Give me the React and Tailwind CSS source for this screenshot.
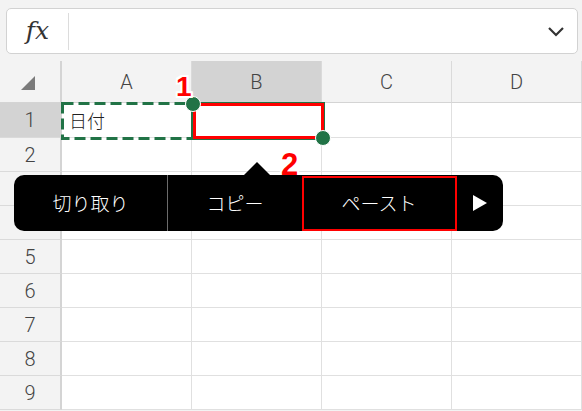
import React from 'react';

const cols = ['A', 'B', 'C', 'D'];
const rows = [1, 2, 3, 4, 5, 6, 7, 8, 9];

function Row({ n }) {
    const active = n === 1;
    return (
        <div className={`flex ${active ? 'h-[35px]' : 'h-[34px]'}`}>
            <div
                className={`w-[62px] shrink-0 flex items-center justify-center border-r-2 border-b border-r-[#d4d4d4] border-b-[#dadada] font-['Roboto',sans-serif] font-light text-[20px] text-[#444] ${
                    active ? 'bg-[#d3d3d3]' : 'bg-[#f3f3f3]'
                }`}
            >
                {n}
            </div>
            {cols.map((c) => (
                <div
                    key={c}
                    className="w-[130px] shrink-0 flex items-center pl-[7px] border-r border-b border-[#e0e0e0] bg-white font-light text-[18px] text-[#222]"
                >
                    {n === 1 && c === 'A' ? '日付' : ''}
                </div>
            ))}
        </div>
    );
}

export default function App() {
    return (
        <div className="relative w-[582px] h-[411px] overflow-hidden bg-[#f3f3f3] font-['Noto_Sans_CJK_JP',sans-serif]">
            {/* 数式バー */}
            <div className="h-[61px] pt-[8px] pl-[6px] pr-[4px]">
                <div className="h-[46px] flex items-center bg-white border border-[#d2d2d2] rounded-[5px]">
                    <div className="w-[62px] h-[37px] flex items-center justify-center border-r border-[#dcdcdc] font-['DejaVu_Serif',serif] italic text-[25px] text-[#333]">
                        fx
                    </div>
                    <div className="flex-1" />
                    <svg className="mr-[12px]" width="18" height="12" viewBox="0 0 18 12">
                        <polyline points="2,3 9,10 16,3" fill="none" stroke="#333" strokeWidth="2.2" />
                    </svg>
                </div>
            </div>

            {/* 列見出し */}
            <div className="flex h-[42px]">
                <div className="w-[62px] shrink-0 flex items-end justify-end pr-[25px] pb-[12px] border-r-2 border-b border-r-[#d4d4d4] border-b-[#d4d4d4]">
                    <svg width="14" height="14" viewBox="0 0 14 14">
                        <polygon points="14,0 14,14 0,14" fill="#7a7a7a" />
                    </svg>
                </div>
                {cols.map((c) => (
                    <div
                        key={c}
                        className={`w-[130px] shrink-0 flex items-center justify-center border-r border-b border-r-[#dadada] border-b-[#d4d4d4] font-['Roboto',sans-serif] font-light text-[20px] text-[#444] ${
                            c === 'B' ? 'bg-[#d3d3d3]' : 'bg-[#f3f3f3]'
                        }`}
                    >
                        {c}
                    </div>
                ))}
            </div>

            {/* 行 */}
            <div className="flex flex-col">
                {rows.map((n) => (
                    <Row key={n} n={n} />
                ))}
            </div>

            {/* A1 コピー範囲 */}
            <svg className="absolute left-[61px] top-[102px]" width="133" height="38">
                <rect x="1.5" y="1.5" width="130" height="35" fill="none" stroke="#217346" strokeWidth="3" strokeDasharray="11 5" />
            </svg>

            {/* B1 選択 */}
            <div className="absolute left-[191px] top-[102px] w-[134px] h-[38px] border-2 border-[#217346]" />
            <div className="absolute left-[193px] top-[103px] w-[131px] h-[36px] border-[3px] border-[#ff0000]" />
            <div className="absolute left-[185px] top-[96px] w-[16px] h-[16px] rounded-full bg-[#217346] border border-white" />
            <div className="absolute left-[315px] top-[130px] w-[16px] h-[16px] rounded-full bg-[#217346] border border-white" />

            {/* 番号 */}
            <div className="absolute left-[176px] top-[73px] font-['Liberation_Sans',sans-serif] font-bold text-[28px] leading-none text-[#ff0000] [text-shadow:2px_0_0_#fff,-2px_0_0_#fff,0_2px_0_#fff,0_-2px_0_#fff,2px_2px_0_#fff,-2px_-2px_0_#fff,2px_-2px_0_#fff,-2px_2px_0_#fff]">
                1
            </div>
            <div className="absolute left-[281px] top-[149px] font-['Liberation_Sans',sans-serif] font-bold text-[31px] leading-none text-[#ff0000] [text-shadow:2px_0_0_#fff,-2px_0_0_#fff,0_2px_0_#fff,0_-2px_0_#fff,2px_2px_0_#fff,-2px_-2px_0_#fff,2px_-2px_0_#fff,-2px_2px_0_#fff]">
                2
            </div>

            {/* コンテキストメニュー */}
            <div className="absolute left-[243px] top-[162px] w-0 h-0 border-l-[14px] border-r-[14px] border-b-[14px] border-l-transparent border-r-transparent border-b-black" />
            <div className="absolute left-[14px] top-[175px] w-[489px] h-[56px] bg-black rounded-[10px] flex items-center text-white font-light text-[19px]">
                <div className="w-[154px] h-full flex items-center justify-center border-r border-[#6b6b6b]">切り取り</div>
                <div className="w-[134px] h-full flex items-center justify-center">コピー</div>
                <div className="w-[154px] h-full flex items-center justify-center">ペースト</div>
                <div className="flex-1 h-full flex items-center justify-center">
                    <svg width="14" height="16" viewBox="0 0 14 16">
                        <polygon points="0,0 14,8 0,16" fill="#fff" />
                    </svg>
                </div>
            </div>
            <div className="absolute left-[302px] top-[176px] w-[155px] h-[55px] border-2 border-[#ff0000]" />
        </div>
    );
}
